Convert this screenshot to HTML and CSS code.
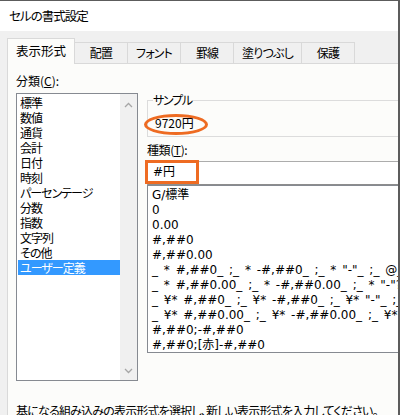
FILE: index.html
```html
<!DOCTYPE html>
<html lang="ja">
<head>
<meta charset="utf-8">
<title>セルの書式設定</title>
<link rel="stylesheet" href="styles.css">
</head>
<body>
<div class="window">
  <div class="titlebar">セルの書式設定</div>
  <div class="tabs">
    <div class="tab tab-active">表示形式</div>
    <div class="tab">配置</div>
    <div class="tab">フォント</div>
    <div class="tab">罫線</div>
    <div class="tab">塗りつぶし</div>
    <div class="tab">保護</div>
  </div>
  <div class="panel">
    <div class="grid">
      <div class="label">分類(<u>C</u>):</div>
      <div class="catlist">
        <ul class="cat-items">
          <li>標準</li>
          <li>数値</li>
          <li>通貨</li>
          <li>会計</li>
          <li>日付</li>
          <li>時刻</li>
          <li>パーセンテージ</li>
          <li>分数</li>
          <li>指数</li>
          <li>文字列</li>
          <li>その他</li>
          <li class="selected">ユーザー定義</li>
        </ul>
        <div class="scrollbar">
          <svg class="chev" width="9" height="6" viewBox="0 0 9 6"><path d="M1 5 L4.5 1.5 L8 5" fill="none" stroke="#a6a6a6" stroke-width="1.3"/></svg>
          <svg class="chev" width="9" height="6" viewBox="0 0 9 6"><path d="M1 1 L4.5 4.5 L8 1" fill="none" stroke="#a6a6a6" stroke-width="1.3"/></svg>
        </div>
      </div>
      <div class="right">
        <fieldset class="sample">
          <legend>サンプル</legend>
          <div class="sample-value"><span class="mark-ellipse"></span>9720円</div>
        </fieldset>
        <div class="label label-type">種類(<u>T</u>):</div>
        <div class="input-wrap">
          <div class="input">#円</div>
          <span class="mark-rect"></span>
        </div>
        <ul class="fmtlist">
          <li>G/標準</li>
          <li>0</li>
          <li>0.00</li>
          <li>#,##0</li>
          <li>#,##0.00</li>
          <li>_ * #,##0_ ;_ * -#,##0_ ;_ * "-"_ ;_ @_ </li>
          <li>_ * #,##0.00_ ;_ * -#,##0.00_ ;_ * "-"??_ ;_ @_ </li>
          <li>_ ¥* #,##0_ ;_ ¥* -#,##0_ ;_ ¥* "-"_ ;_ @_ </li>
          <li>_ ¥* #,##0.00_ ;_ ¥* -#,##0.00_ ;_ ¥* "-"??_ ;_ @_ </li>
          <li>#,##0;-#,##0</li>
          <li>#,##0;[赤]-#,##0</li>
        </ul>
      </div>
    </div>
    <div class="hint">基になる組み込みの表示形式を選択し、新しい表示形式を入力してください。</div>
  </div>
</div>
</body>
</html>
```
FILE: styles.css
```css
* { box-sizing: border-box; }
html, body { margin: 0; padding: 0; }
body {
  width: 400px;
  height: 415px;
  overflow: hidden;
  font-family: "Noto Sans CJK JP", "Noto Sans", sans-serif;
  font-size: 12px;
  line-height: 14px;
  font-feature-settings: "palt";
  color: #000;
  background: #fff;
}
.window {
  width: 400px;
  height: 415px;
  overflow: hidden;
  border-top: 1px solid #5c5c5c;
  border-right: 2px solid #5c5c5c;
  background: #f0f0f0;
}
.titlebar {
  height: 30px;
  background: #fff;
  padding-left: 9px;
  line-height: 30px;
  font-size: 12.5px;
  letter-spacing: -1px;
}
.tabs {
  height: 32px;
  display: flex;
  align-items: flex-end;
  padding-left: 7px;
  background: #f0f0f0;
}
.tab {
  height: 21px;
  min-width: 53px;
  padding: 0 8px;
  text-align: center;
  border-top: 1px solid #d9d9d9;
  border-right: 1px solid #d9d9d9;
  line-height: 20px;
  white-space: nowrap;
  letter-spacing: -0.8px;
}
.tab-active {
  width: 68px;
  height: 26px;
  margin-bottom: -1px;
  padding: 0;
  border-left: 1px solid #d9d9d9;
  background: #fcfcfa;
  position: relative;
  z-index: 1;
  line-height: 24px;
  font-size: 12.5px;
  letter-spacing: 0;
}
.panel {
  margin-left: 7px;
  width: 460px;
  height: 360px;
  border-left: 1px solid #d9d9d9;
  border-top: 1px solid #d9d9d9;
  background: #fcfcfa;
  padding: 10px 0 0 8px;
}
.grid {
  display: grid;
  grid-template-columns: 122px 320px;
  grid-template-rows: auto auto;
  column-gap: 9px;
  row-gap: 5px;
}
.label { height: 14px; }
.label u { text-decoration-thickness: 1px; text-underline-offset: 1px; }
.catlist {
  grid-column: 1;
  grid-row: 2;
  height: 288px;
  border: 1px solid #868a91;
  background: #fff;
  display: flex;
}
.cat-items {
  list-style: none;
  margin: 0;
  padding: 1px 0 0 1px;
  flex: 1;
  letter-spacing: -1px;
}
.cat-items li {
  height: 15px;
  line-height: 15px;
  padding-left: 2px;
  white-space: nowrap;
}
.cat-items li.selected {
  background: #3399ff;
  color: #fff;
}
.scrollbar {
  width: 17px;
  background: #f0f0f0;
  display: flex;
  flex-direction: column;
  justify-content: space-between;
  align-items: center;
  padding: 8px 0 6px;
}
.chev { display: block; }
.right {
  grid-column: 2;
  grid-row: 2;
}
.sample {
  margin: 0;
  min-width: 0;
  padding: 9px 0 6px 7px;
  border: 1px solid #dcdcdc;
}
.sample legend {
  padding: 0;
  margin-left: -2px;
  line-height: 14px;
  letter-spacing: -1.3px;
}
.sample-value {
  position: relative;
  width: max-content;
}
.mark-ellipse {
  position: absolute;
  left: -11px;
  top: -2px;
  width: 64px;
  height: 21px;
  border: 3px solid #ee6b22;
  border-radius: 50%;
}
.label-type { margin-top: 6px; letter-spacing: -0.4px; }
.input-wrap {
  position: relative;
  margin-top: 4px;
}
.input {
  height: 24px;
  border: 1px solid #acacac;
  border-bottom-color: #8d8d8d;
  padding: 3px 0 0 5px;
  background: #fff;
  font-family: "DejaVu Sans", "Noto Sans CJK JP", sans-serif;
}
.mark-rect {
  position: absolute;
  left: -2px;
  top: -1px;
  width: 54px;
  height: 24px;
  border: 3px solid #ee6b22;
}
.fmtlist {
  list-style: none;
  margin: 0;
  height: 168px;
  border: 1px solid #868a91;
  background: #fff;
  padding: 2px 0 0 4px;
  font-family: "DejaVu Sans", "Noto Sans CJK JP", sans-serif;
  word-spacing: 2px;
}
.fmtlist li {
  height: 15px;
  line-height: 15px;
  white-space: pre;
}
.hint {
  margin-top: 23px;
  white-space: nowrap;
  letter-spacing: -0.8px;
}
```
